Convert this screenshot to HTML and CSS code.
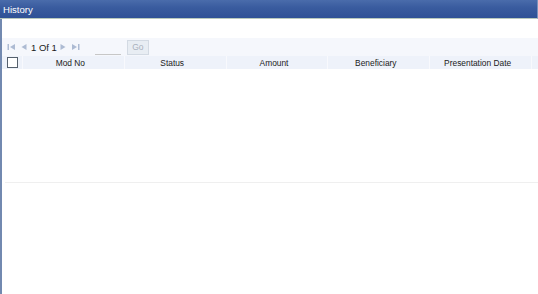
FILE: index.html
```html
<!DOCTYPE html>
<html lang="en">

<head>
  <meta charset="UTF-8">
  <meta name="viewport" content="width=device-width, initial-scale=1.0">
  <title>History</title>
  <link rel="stylesheet" href="styles.css">
</head>

<body>
  <div class="panel">
    <header class="titlebar">History</header>

    <section class="content">
      <div class="toolbar">
        <span class="pager-icon">
          <svg viewBox="0 0 9 8"><rect x="0.5" y="1" width="1.5" height="6"></rect><path d="M8 1 L3 4 L8 7 Z"></path></svg>
        </span>
        <span class="pager-icon">
          <svg viewBox="0 0 9 8"><path d="M7.5 1 L2.5 4 L7.5 7 Z"></path></svg>
        </span>
        <span class="pager-text">1 Of 1</span>
        <span class="pager-icon">
          <svg viewBox="0 0 9 8"><path d="M1.5 1 L6.5 4 L1.5 7 Z"></path></svg>
        </span>
        <span class="pager-icon">
          <svg viewBox="0 0 9 8"><path d="M1 1 L6 4 L1 7 Z"></path><rect x="7" y="1" width="1.5" height="6"></rect></svg>
        </span>
        <input class="page-input" type="text">
        <button class="go-button" disabled>Go</button>
      </div>

      <div class="grid-head">
        <div class="col col-check"><span class="checkbox"></span></div>
        <div class="col">Mod No</div>
        <div class="col">Status</div>
        <div class="col">Amount</div>
        <div class="col">Beneficiary</div>
        <div class="col">Presentation Date</div>
        <div class="col col-rest"></div>
      </div>

      <div class="grid-body"></div>
    </section>
  </div>
</body>

</html>
```

FILE: styles.css
```css
:root {
  --head-blue: #2f5196;
  --text-color: #1a1a1a;
  --muted: #adbbd3;
}

* {
  box-sizing: border-box;
}

body {
  margin: 0;
  font-family: "Liberation Sans", Arial, sans-serif;
  color: var(--text-color);
  background: #fff;
}

.panel {
  width: 538px;
  height: 294px;
  display: flex;
  flex-direction: column;
}

.titlebar {
  height: 19px;
  padding: 4px 0 0 3px;
  font-size: 9.6px;
  color: #fff;
  background: linear-gradient(#4a6cab, #3a5c9f 40%, var(--head-blue));
  border-bottom: 1px solid #b9c9bd;
  border-right: 1px solid #7a92bb;
}

.content {
  flex: 1;
  border-left: 2px solid #7289b0;
  padding-top: 19px;
}

.toolbar {
  height: 18px;
  display: flex;
  align-items: center;
  padding-left: 3px;
  background: #f5f7fc;
}

.pager-icon {
  display: flex;
  width: 12px;
  justify-content: center;
}

.pager-icon svg {
  width: 9px;
  height: 8px;
  fill: var(--muted);
}

.pager-text {
  margin: 0 1px 0 2px;
  font-size: 9.5px;
}

.page-input {
  width: 26px;
  height: 12px;
  margin: 4px 6px 0 13px;
  border: none;
  border-bottom: 1px solid #c7c7c7;
  background: transparent;
  padding: 0;
}

.go-button {
  width: 22px;
  height: 15px;
  padding: 0;
  font-family: inherit;
  font-size: 8.5px;
  color: #a9b1bd;
  background: #e8edf3;
  border: 1px solid #d3dae3;
  border-radius: 0;
}

.grid-head {
  height: 13px;
  display: flex;
  background: #eef2fa;
  font-size: 8.4px;
}

.col {
  width: 102px;
  display: flex;
  align-items: center;
  justify-content: center;
  padding-right: 6px;
  border-right: 1px solid #f8f9fd;
}

.col-check {
  width: 21px;
  justify-content: flex-start;
  padding: 0 0 0 5px;
}

.col-rest {
  flex: 1;
  border-right: none;
}

.checkbox {
  width: 11px;
  height: 11px;
  border: 1px solid #55606d;
  background: #fff;
}

.grid-body {
  height: 114px;
  margin-left: 3px;
  border-bottom: 1px solid #efefef;
}
```
